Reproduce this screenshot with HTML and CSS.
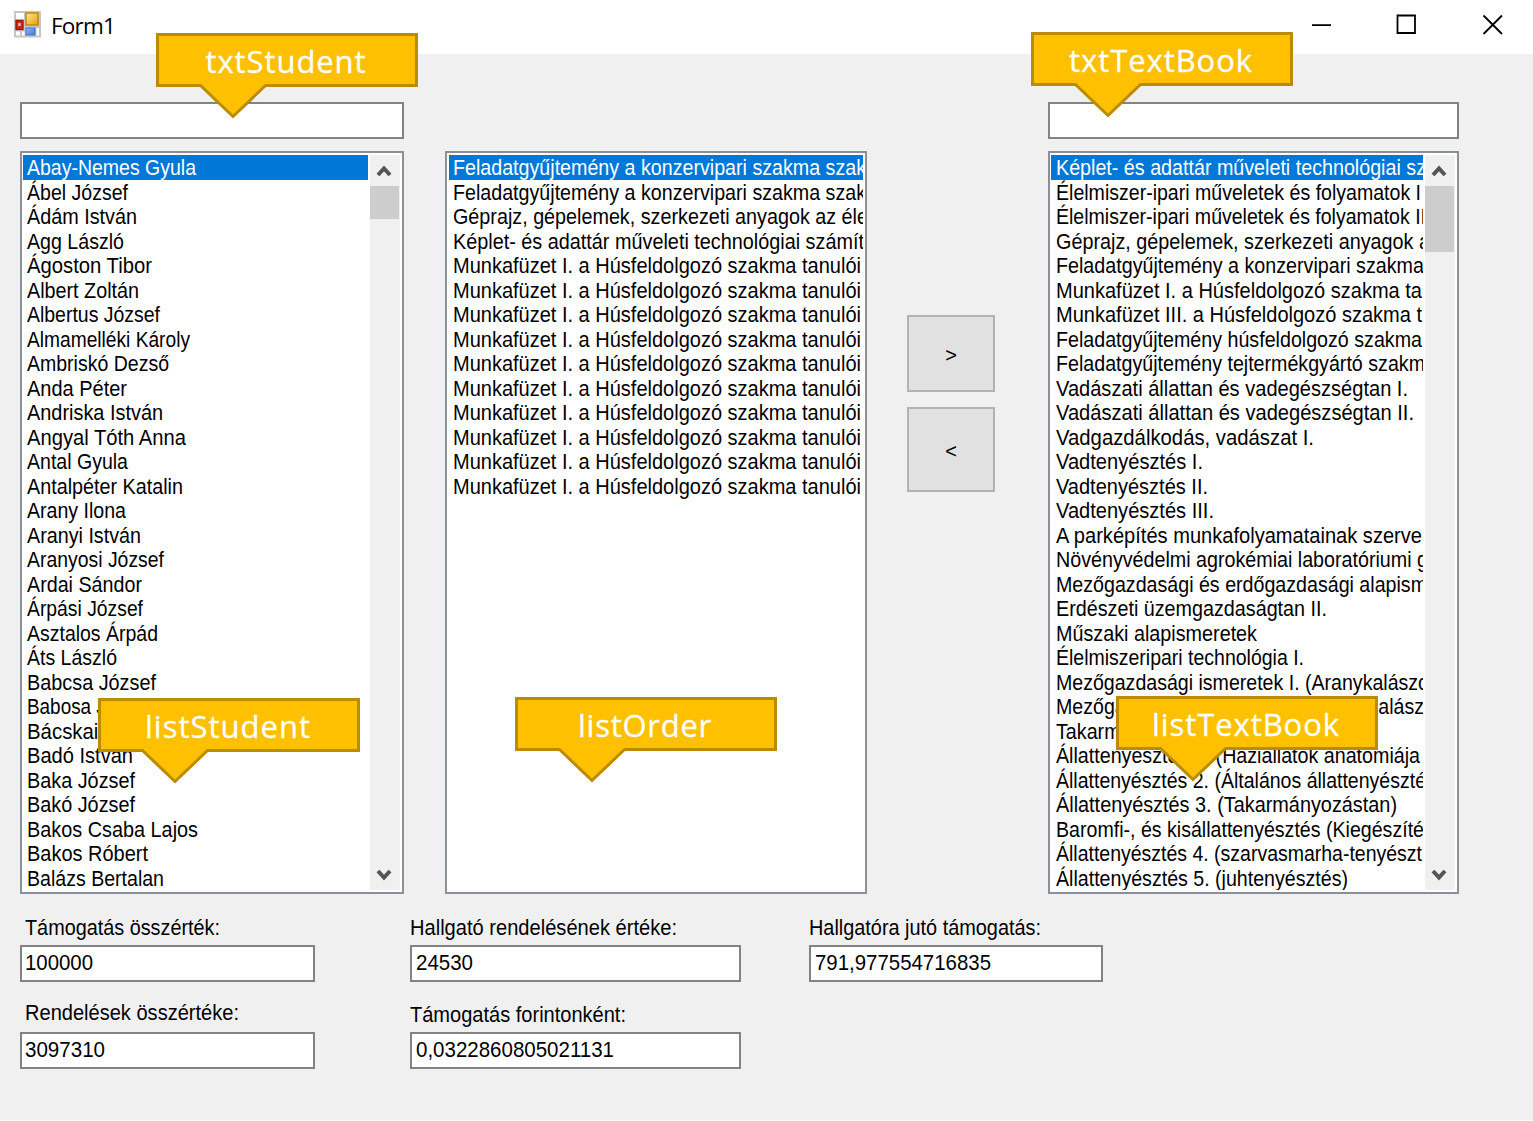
FILE: index.html
```html
<!DOCTYPE html>
<html lang="hu">
<head>
<meta charset="utf-8">
<title>Form1</title>
<link rel="stylesheet" href="styles.css">
</head>
<body>
<div class="window">
  <header class="titlebar">
    <svg class="app-icon" width="27" height="27" viewBox="0 0 27 27">
      <defs>
        <linearGradient id="gy" x1="0" y1="0" x2="1" y2="1"><stop offset="0" stop-color="#ffe79a"/><stop offset="1" stop-color="#e3a400"/></linearGradient>
        <linearGradient id="gb" x1="0" y1="0" x2="1" y2="1"><stop offset="0" stop-color="#8fbcff"/><stop offset="1" stop-color="#3c78d8"/></linearGradient>
      </defs>
      <rect width="27" height="26.500" fill="#c6c6c6"/>
      <path d="M2 2h8v6H2zM2 20.500h4v4H2zM8 20.500h2.500v4H8zM22.500 17h2.500v7.500h-2.500z" fill="#fff"/>
      <rect x="12" y="2" width="12" height="12" fill="url(#gy)" stroke="#c08a08" stroke-width="1.500"/>
      <rect x="2" y="9.500" width="7" height="9" fill="#c8281c" stroke="#9c1409" stroke-width="1.300"/>
      <rect x="4" y="12" width="3" height="3" fill="#f0a096"/>
      <rect x="12" y="17" width="9" height="7" fill="url(#gb)" stroke="#3f74cc"/>
    </svg>
    <h1 class="title"><span class="fit spaced" data-w="64">Form1</span></h1>
    <svg class="controls" width="196" height="24" viewBox="0 0 196 24">
      <path d="M1 13.200H20M86.500 3.500H104V21H86.500ZM172.500 3.500L191 22M191 3.500L172.500 22" fill="none" stroke="#000" stroke-width="1.800"/>
    </svg>
  </header>

  <main class="lists">
    <section class="col student">
      <div class="textbox"></div>
      <div class="listbox">
        <ul class="rows">
          <li class="selected"><span class="fit" data-w="169">Abay-Nemes Gyula</span></li>
          <li><span class="fit" data-w="101">Ábel József</span></li>
          <li><span class="fit" data-w="110">Ádám István</span></li>
          <li><span class="fit" data-w="97">Agg László</span></li>
          <li><span class="fit" data-w="125">Ágoston Tibor</span></li>
          <li><span class="fit" data-w="112">Albert Zoltán</span></li>
          <li><span class="fit" data-w="133">Albertus József</span></li>
          <li><span class="fit" data-w="163">Almamelléki Károly</span></li>
          <li><span class="fit" data-w="142">Ambriskó Dezső</span></li>
          <li><span class="fit" data-w="100">Anda Péter</span></li>
          <li><span class="fit" data-w="136">Andriska István</span></li>
          <li><span class="fit" data-w="159">Angyal Tóth Anna</span></li>
          <li><span class="fit" data-w="101">Antal Gyula</span></li>
          <li><span class="fit" data-w="156">Antalpéter Katalin</span></li>
          <li><span class="fit" data-w="99">Arany Ilona</span></li>
          <li><span class="fit" data-w="114">Aranyi István</span></li>
          <li><span class="fit" data-w="137">Aranyosi József</span></li>
          <li><span class="fit" data-w="115">Ardai Sándor</span></li>
          <li><span class="fit" data-w="116">Árpási József</span></li>
          <li><span class="fit" data-w="131">Asztalos Árpád</span></li>
          <li><span class="fit" data-w="90">Áts László</span></li>
          <li><span class="fit" data-w="129">Babcsa József</span></li>
          <li><span class="fit" data-w="124">Babosa József</span></li>
          <li><span class="fit" data-w="136">Bácskai József</span></li>
          <li><span class="fit" data-w="106">Badó István</span></li>
          <li><span class="fit" data-w="108">Baka József</span></li>
          <li><span class="fit" data-w="108">Bakó József</span></li>
          <li><span class="fit" data-w="171">Bakos Csaba Lajos</span></li>
          <li><span class="fit" data-w="121">Bakos Róbert</span></li>
          <li><span class="fit" data-w="137">Balázs Bertalan</span></li>
        </ul>
        <div class="scrollbar">
          <svg class="arrow" width="16" height="14" viewBox="0 0 16 14"><path d="M2 11L8 4.500L14 11" fill="none" stroke="#555" stroke-width="4"/></svg>
          <div class="thumb"></div>
          <svg class="arrow down" width="16" height="14" viewBox="0 0 16 14"><path d="M2 3L8 9.500L14 3" fill="none" stroke="#555" stroke-width="4"/></svg>
        </div>
      </div>
    </section>

    <section class="col order">
      <div class="listbox">
        <ul class="rows">
          <li class="selected"><span class="fit" data-w="413">Feladatgyűjtemény a konzervipari szakma szak</span></li>
          <li><span class="fit" data-w="413">Feladatgyűjtemény a konzervipari szakma szak</span></li>
          <li><span class="fit" data-w="415">Géprajz, gépelemek, szerkezeti anyagok az éle</span></li>
          <li><span class="fit" data-w="411">Képlet- és adattár műveleti technológiai számít</span></li>
          <li><span class="fit" data-w="408">Munkafüzet I. a Húsfeldolgozó szakma tanulói</span></li>
          <li><span class="fit" data-w="408">Munkafüzet I. a Húsfeldolgozó szakma tanulói</span></li>
          <li><span class="fit" data-w="408">Munkafüzet I. a Húsfeldolgozó szakma tanulói</span></li>
          <li><span class="fit" data-w="408">Munkafüzet I. a Húsfeldolgozó szakma tanulói</span></li>
          <li><span class="fit" data-w="408">Munkafüzet I. a Húsfeldolgozó szakma tanulói</span></li>
          <li><span class="fit" data-w="408">Munkafüzet I. a Húsfeldolgozó szakma tanulói</span></li>
          <li><span class="fit" data-w="408">Munkafüzet I. a Húsfeldolgozó szakma tanulói</span></li>
          <li><span class="fit" data-w="408">Munkafüzet I. a Húsfeldolgozó szakma tanulói</span></li>
          <li><span class="fit" data-w="408">Munkafüzet I. a Húsfeldolgozó szakma tanulói</span></li>
          <li><span class="fit" data-w="408">Munkafüzet I. a Húsfeldolgozó szakma tanulói</span></li>
        </ul>
      </div>
    </section>

    <div class="buttons">
      <div class="btn add">&gt;</div>
      <div class="btn remove">&lt;</div>
    </div>

    <section class="col textbook">
      <div class="textbox"></div>
      <div class="listbox">
        <ul class="rows">
          <li class="selected"><span class="fit" data-w="370">Képlet- és adattár műveleti technológiai sz</span></li>
          <li><span class="fit" data-w="365">Élelmiszer-ipari műveletek és folyamatok I</span></li>
          <li><span class="fit" data-w="370">Élelmiszer-ipari műveletek és folyamatok II</span></li>
          <li><span class="fit" data-w="374">Géprajz, gépelemek, szerkezeti anyagok a</span></li>
          <li><span class="fit" data-w="368">Feladatgyűjtemény a konzervipari szakma</span></li>
          <li><span class="fit" data-w="366">Munkafüzet I. a Húsfeldolgozó szakma ta</span></li>
          <li><span class="fit" data-w="366">Munkafüzet III. a Húsfeldolgozó szakma t</span></li>
          <li><span class="fit" data-w="366">Feladatgyűjtemény húsfeldolgozó szakma</span></li>
          <li><span class="fit" data-w="369">Feladatgyűjtemény tejtermékgyártó szakm</span></li>
          <li><span class="fit" data-w="352">Vadászati állattan és vadegészségtan I.</span></li>
          <li><span class="fit" data-w="358">Vadászati állattan és vadegészségtan II.</span></li>
          <li><span class="fit" data-w="258">Vadgazdálkodás, vadászat I.</span></li>
          <li><span class="fit" data-w="147">Vadtenyésztés I.</span></li>
          <li><span class="fit" data-w="152">Vadtenyésztés II.</span></li>
          <li><span class="fit" data-w="158">Vadtenyésztés III.</span></li>
          <li><span class="fit" data-w="366">A parképítés munkafolyamatainak szerve</span></li>
          <li><span class="fit" data-w="372">Növényvédelmi agrokémiai laboratóriumi g</span></li>
          <li><span class="fit" data-w="371">Mezőgazdasági és erdőgazdasági alapism</span></li>
          <li><span class="fit" data-w="271">Erdészeti üzemgazdaságtan II.</span></li>
          <li><span class="fit" data-w="201">Műszaki alapismeretek</span></li>
          <li><span class="fit" data-w="248">Élelmiszeripari technológia I.</span></li>
          <li><span class="fit" data-w="373">Mezőgazdasági ismeretek I. (Aranykalászo</span></li>
          <li><span class="fit" data-w="368">Mezőgazdasági ismeretek II. (Aranykalász</span></li>
          <li><span class="fit" data-w="138">Takarmányozás</span></li>
          <li><span class="fit" data-w="364">Állattenyésztés 1. (Háziállatok anatómiája</span></li>
          <li><span class="fit" data-w="370">Állattenyésztés 2. (Általános állattenyészté</span></li>
          <li><span class="fit" data-w="341">Állattenyésztés 3. (Takarmányozástan)</span></li>
          <li><span class="fit" data-w="368">Baromfi-, és kisállattenyésztés (Kiegészíté</span></li>
          <li><span class="fit" data-w="366">Állattenyésztés 4. (szarvasmarha-tenyészt</span></li>
          <li><span class="fit" data-w="292">Állattenyésztés 5. (juhtenyésztés)</span></li>
        </ul>
        <div class="scrollbar">
          <svg class="arrow" width="16" height="14" viewBox="0 0 16 14"><path d="M2 11L8 4.500L14 11" fill="none" stroke="#555" stroke-width="4"/></svg>
          <div class="thumb tall"></div>
          <svg class="arrow down" width="16" height="14" viewBox="0 0 16 14"><path d="M2 3L8 9.500L14 3" fill="none" stroke="#555" stroke-width="4"/></svg>
        </div>
      </div>
    </section>
  </main>

  <footer class="totals">
    <div class="group g1">
      <label class="indent"><span class="fit" data-w="195">Támogatás összérték:</span></label>
      <div class="textbox"><span class="fit" data-w="68">100000</span></div>
      <label class="indent second raised"><span class="fit" data-w="214">Rendelések összértéke:</span></label>
      <div class="textbox"><span class="fit" data-w="80">3097310</span></div>
    </div>
    <div class="group g2">
      <label><span class="fit" data-w="267">Hallgató rendelésének értéke:</span></label>
      <div class="textbox"><span class="fit" data-w="57">24530</span></div>
      <label class="second"><span class="fit" data-w="216">Támogatás forintonként:</span></label>
      <div class="textbox"><span class="fit" data-w="198">0,0322860805021131</span></div>
    </div>
    <div class="group g3">
      <label><span class="fit" data-w="232">Hallgatóra jutó támogatás:</span></label>
      <div class="textbox"><span class="fit" data-w="176">791,977554716835</span></div>
    </div>
  </footer>

  <div class="callout c1"><svg width="262" height="88"><path d="M1.500 1.500H260.500V52.500H109.500L77 83.500L44.500 52.500H1.500Z"/></svg><span class="fit spaced" data-w="161">txtStudent</span></div>
  <div class="callout c2"><svg width="262" height="88"><path d="M1.500 1.500H260.500V52.500H109.500L77 83.500L44.500 52.500H1.500Z"/></svg><span class="fit spaced" data-w="184">txtTextBook</span></div>
  <div class="callout c3"><svg width="262" height="88"><path d="M1.500 1.500H260.500V52.500H109.500L77 83.500L44.500 52.500H1.500Z"/></svg><span class="fit spaced" data-w="166">listStudent</span></div>
  <div class="callout c4"><svg width="262" height="88"><path d="M1.500 1.500H260.500V52.500H109.500L77 83.500L44.500 52.500H1.500Z"/></svg><span class="fit spaced" data-w="134">listOrder</span></div>
  <div class="callout c5"><svg width="262" height="88"><path d="M1.500 1.500H260.500V52.500H109.500L77 83.500L44.500 52.500H1.500Z"/></svg><span class="fit spaced" data-w="188">listTextBook</span></div>
</div>
<script src="fit.js"></script>
</body>
</html>
```
FILE: styles.css
```css
* { box-sizing: border-box; }
body {
  margin: 0;
  background: #f0f0f0;
  color: #000;
  font-family: "Liberation Sans", Arial, sans-serif;
  font-size: 21.500px;
}
.window {
  position: relative;
  width: 1533px;
  height: 1121px;
  overflow: hidden;
  background: #f0f0f0;
  border-bottom: 1px solid #fcf8f2;
}
.fit { display: inline-block; white-space: pre; transform-origin: 0 50%; }

.titlebar {
  display: flex;
  align-items: flex-start;
  height: 54px;
  padding: 11px 26px 0 14px;
  background: #fff;
}
.title {
  flex: 1;
  margin: 0 0 0 10px;
  font: 400 22.500px/29px "Open Sans", "Noto Sans", sans-serif;
}
.controls { margin: 1px 0 0; }

.lists { display: flex; height: 840px; padding: 48px 0 0 20px; }
.col { display: flex; flex-direction: column; justify-content: flex-end; gap: 12px; }
.student { width: 384px; }
.order { width: 422px; margin-left: 41px; }
.textbook { width: 411px; margin-left: 53px; }
.textbox {
  display: flex;
  align-items: center;
  height: 37px;
  padding: 0 4px;
  background: #fff;
  border: 2px solid #838383;
}
.g1 .textbox { padding-left: 3px; }
.listbox {
  display: flex;
  height: 743px;
  padding: 2px;
  background: #fff;
  border: 2px solid #8a8f98;
}
.student .listbox, .textbook .listbox { padding-left: 1px; }
.rows { flex: 1; min-width: 0; margin: 0; padding: 0; list-style: none; overflow: hidden; }
.student .rows, .textbook .rows { margin-right: 2px; }
.rows li {
  height: 24.500px;
  padding-left: 4px;
  line-height: 26px;
  white-space: nowrap;
}
.textbook .rows li { padding-left: 5px; }
.rows .selected { background: #0078d7; color: #fff; }
.scrollbar {
  display: flex;
  flex-direction: column;
  width: 30px;
  padding: 9px 1px 8px 0;
  background: #f0f0f0;
}
.arrow { margin-left: 6px; flex: none; }
.thumb { height: 33px; margin-top: 8px; background: #cdcdcd; }
.thumb.tall { height: 66px; }
.down { margin-top: auto; }

.buttons { display: flex; flex-direction: column; gap: 15px; width: 88px; margin: 213px 0 0 40px; }
.btn {
  display: flex;
  align-items: center;
  justify-content: center;
  border: 2px solid #b2b2b2;
  background: #e1e1e1;
  font-size: 20px;
}
.add { height: 77px; padding-top: 3px; }
.remove { height: 85px; padding-top: 3px; }

.totals { display: flex; align-items: flex-start; padding: 21px 0 0 20px; }
.group { display: flex; flex-direction: column; }
.g1 { width: 295px; }
.g2 { width: 331px; margin-left: 95px; }
.g3 { width: 294px; margin-left: 68px; }
.group label { height: 30px; line-height: 26px; }
.group .second { height: 50px; padding-top: 20px; }
.group .raised { padding-top: 18px; }
.group .indent { padding-left: 5px; }

.callout {
  position: absolute;
  width: 262px;
  height: 54px;
  display: flex;
  justify-content: center;
  color: #fff;
  font: 400 31px/56px "Open Sans", "Noto Sans", sans-serif;
}
.callout svg { position: absolute; left: 0; top: 0; fill: #ffc000; stroke: #bc8c00; stroke-width: 3px; }
.callout .fit { position: relative; left: -1px; -webkit-text-stroke: 0.300px #fff; }
.c1 { left: 156px; top: 33px; }
.c2 { left: 1031px; top: 32px; }
.c3 { left: 98px; top: 698px; }
.c4 { left: 515px; top: 697px; }
.c5 { left: 1116px; top: 696px; }
```
FILE: fit.js
```js
// Bring each label to the width given in data-w: spaced labels through
// letter spacing, all others by condensing the glyphs.
document.querySelectorAll('.fit').forEach(function (el) {
  var width = el.getBoundingClientRect().width;
  if (el.classList.contains('spaced')) {
    el.style.letterSpacing = ((el.dataset.w - width) / el.textContent.length).toFixed(3) + 'px';
  } else {
    el.style.transform = 'scaleX(' + (el.dataset.w / width).toFixed(4) + ')';
  }
});
```
